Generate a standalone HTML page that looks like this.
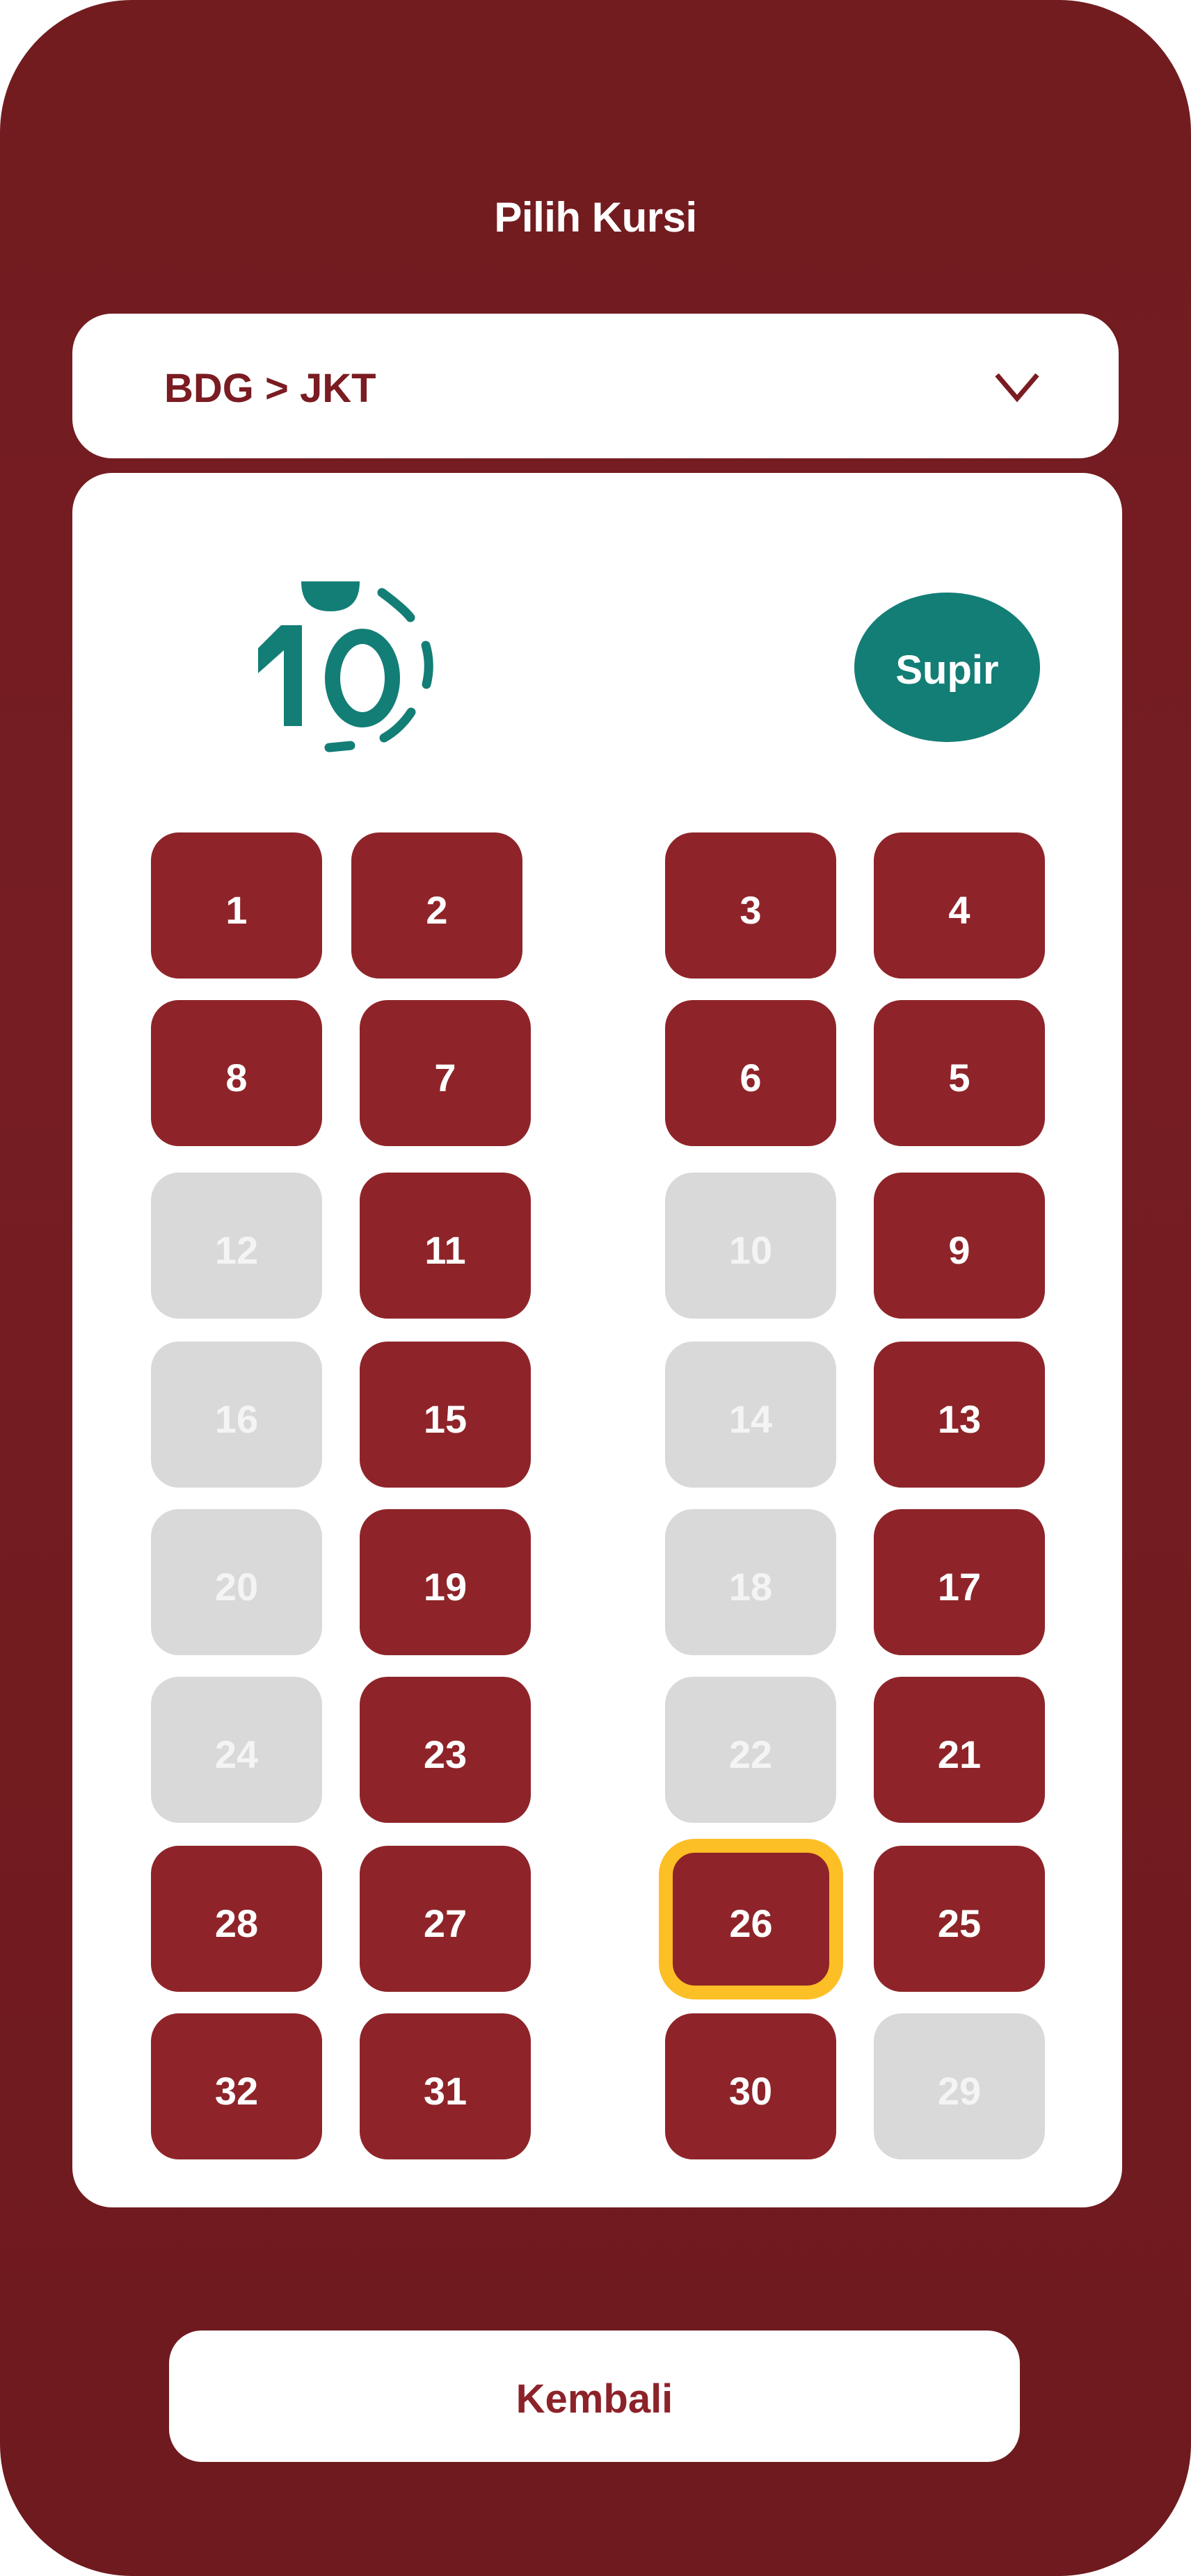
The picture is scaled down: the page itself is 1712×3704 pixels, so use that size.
<!DOCTYPE html>
<html><head><meta charset="utf-8">
<style>
*{margin:0;padding:0;box-sizing:border-box}
html,body{width:1712px;height:3704px;background:#fff;overflow:hidden}
body{font-family:"Liberation Sans",sans-serif;position:relative}
.bg{position:absolute;left:0;top:0;width:1712px;height:3704px;border-radius:190px;background:linear-gradient(180deg,#721c20 0%,#751d22 40%,#6e1a1e 100%);}
.title{position:absolute;left:0;width:1712px;top:278px;text-align:center;color:#fff;font-size:60px;font-weight:bold;letter-spacing:-0.5px}
.dd{position:absolute;left:104px;top:451px;width:1504px;height:208px;background:#fff;border-radius:57px}
.dd .t{position:absolute;left:132px;top:78px;font-size:58px;font-weight:bold;color:#7a1c22;line-height:60px}
.card{position:absolute;left:104px;top:680px;width:1509px;height:2494px;background:#fff;border-radius:57px}
.seat{position:absolute;width:246px;height:210px;border-radius:40px;background:#8e2429;color:#fff;font-size:56px;font-weight:bold;display:flex;align-items:center;justify-content:center;padding-top:12px}
.g{background:#d9d9d9;color:#f4f4f4}
.sel{border:20px solid #fdbf26;width:265px;height:231px;border-radius:52px}
.supir{position:absolute;left:1228px;top:852px;width:267px;height:215px;border-radius:50%;background:#137e76;color:#fff;font-size:58px;font-weight:bold;display:flex;align-items:center;justify-content:center;padding-top:8px}
.btn{position:absolute;left:243px;top:3351px;width:1223px;height:189px;background:#fff;border-radius:47px;color:#8c2329;font-size:58px;font-weight:bold;display:flex;align-items:center;justify-content:center;padding-top:8px}
</style></head><body>
<div class="bg"></div>
<div class="title">Pilih Kursi</div>
<div class="dd"><div class="t">BDG &gt; JKT</div>
<svg style="position:absolute;left:1325px;top:84px" width="66" height="44" viewBox="0 0 66 44"><path d="M4 4 L33 38 L62 4" fill="none" stroke="#7a1c22" stroke-width="7"/></svg>
</div>
<div class="card"></div>
<svg style="position:absolute;left:360px;top:830px" width="280" height="260" viewBox="360 830 280 260">
<path d="M433 836 L517 836 Q517 879 475 879 Q433 879 433 836 Z" fill="#137e76"/>
<polygon points="371,932 404,899 434,899 434,1044 408,1044 408,935 371,968" fill="#137e76"/>
<ellipse cx="521" cy="975" rx="43" ry="60" fill="none" stroke="#137e76" stroke-width="22"/>
<g fill="none" stroke="#137e76" stroke-width="13" stroke-linecap="round">
<path d="M549 852 Q580 875 590 888"/>
<path d="M612 928 Q620 955 613 984"/>
<path d="M591 1024 Q575 1048 552 1061"/>
<path d="M473 1075 L504 1072"/>
</g>
</svg>
<div class="supir">Supir</div>

<div class="seat" style="left:217px;top:1197px">1</div>
<div class="seat" style="left:505px;top:1197px">2</div>
<div class="seat" style="left:956px;top:1197px">3</div>
<div class="seat" style="left:1256px;top:1197px">4</div>

<div class="seat" style="left:217px;top:1438px">8</div>
<div class="seat" style="left:517px;top:1438px">7</div>
<div class="seat" style="left:956px;top:1438px">6</div>
<div class="seat" style="left:1256px;top:1438px">5</div>

<div class="seat g" style="left:217px;top:1686px">12</div>
<div class="seat" style="left:517px;top:1686px">11</div>
<div class="seat g" style="left:956px;top:1686px">10</div>
<div class="seat" style="left:1256px;top:1686px">9</div>

<div class="seat g" style="left:217px;top:1929px">16</div>
<div class="seat" style="left:517px;top:1929px">15</div>
<div class="seat g" style="left:956px;top:1929px">14</div>
<div class="seat" style="left:1256px;top:1929px">13</div>

<div class="seat g" style="left:217px;top:2170px">20</div>
<div class="seat" style="left:517px;top:2170px">19</div>
<div class="seat g" style="left:956px;top:2170px">18</div>
<div class="seat" style="left:1256px;top:2170px">17</div>

<div class="seat g" style="left:217px;top:2411px">24</div>
<div class="seat" style="left:517px;top:2411px">23</div>
<div class="seat g" style="left:956px;top:2411px">22</div>
<div class="seat" style="left:1256px;top:2411px">21</div>

<div class="seat" style="left:217px;top:2654px">28</div>
<div class="seat" style="left:517px;top:2654px">27</div>
<div class="seat sel" style="left:947px;top:2644px">26</div>
<div class="seat" style="left:1256px;top:2654px">25</div>

<div class="seat" style="left:217px;top:2895px">32</div>
<div class="seat" style="left:517px;top:2895px">31</div>
<div class="seat" style="left:956px;top:2895px">30</div>
<div class="seat g" style="left:1256px;top:2895px">29</div>

<div class="btn">Kembali</div>
</body></html>
